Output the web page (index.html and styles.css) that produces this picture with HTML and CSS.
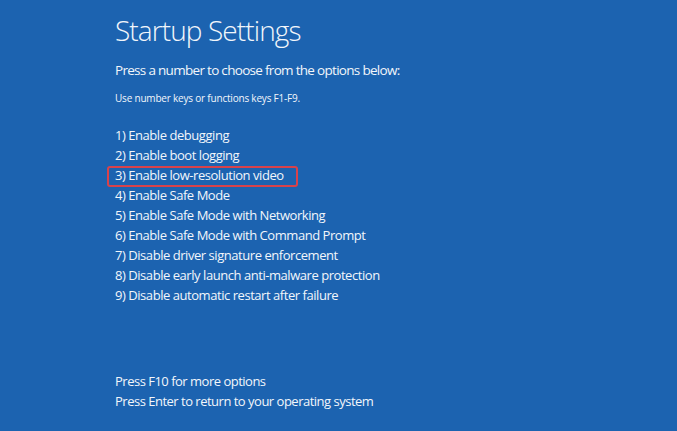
FILE: index.html
```html
<!DOCTYPE html>
<html>
<head>
<meta charset="utf-8">
<link rel="stylesheet" href="styles.css">
</head>
<body>
<div class="screen">
  <h1 class="title">Startup Settings</h1>
  <p class="lead">Press a number to choose from the options below:</p>
  <p class="hint">Use number keys or functions keys F1-F9.</p>
  <ul class="options">
    <li>1) Enable debugging</li>
    <li>2) Enable boot logging</li>
    <li class="marked">3) Enable low-resolution video</li>
    <li>4) Enable Safe Mode</li>
    <li>5) Enable Safe Mode with Networking</li>
    <li>6) Enable Safe Mode with Command Prompt</li>
    <li>7) Disable driver signature enforcement</li>
    <li>8) Disable early launch anti-malware protection</li>
    <li>9) Disable automatic restart after failure</li>
  </ul>
  <div class="footer">
    <p>Press F10 for more options</p>
    <p>Press Enter to return to your operating system</p>
  </div>
</div>
</body>
</html>
```

FILE: styles.css
```css
html, body {
  margin: 0;
  padding: 0;
  height: 100%;
}
body {
  background: #1c63b0;
  color: #f2f6fb;
  font-family: "Open Sans", "Noto Sans", sans-serif;
}
.screen {
  box-sizing: border-box;
  height: 100%;
  display: flex;
  flex-direction: column;
  padding: 12px 0 20px 115px;
}
.title {
  margin: 0;
  font-size: 28px;
  font-weight: 300;
  line-height: 36px;
  letter-spacing: -0.9px;
}
.lead {
  margin: 12px 0 0 0;
  font-size: 13.5px;
  line-height: 20px;
  letter-spacing: -0.7px;
}
.hint {
  margin: 10px 0 0 0;
  font-size: 10px;
  line-height: 16px;
  letter-spacing: -0.2px;
}
.options {
  list-style: none;
  margin: 19px 0 0 0;
  padding: 0;
  font-size: 13px;
  line-height: 20px;
  letter-spacing: -0.45px;
}
.options li {
  position: relative;
}
.marked::after {
  content: "";
  position: absolute;
  left: -8px;
  top: 1px;
  width: 187px;
  height: 17px;
  border: 2.5px solid #d8424b;
  border-radius: 3px;
}
.footer {
  margin-top: auto;
  font-size: 13px;
  line-height: 20px;
  letter-spacing: -0.5px;
}
.footer p {
  margin: 0;
}
```
